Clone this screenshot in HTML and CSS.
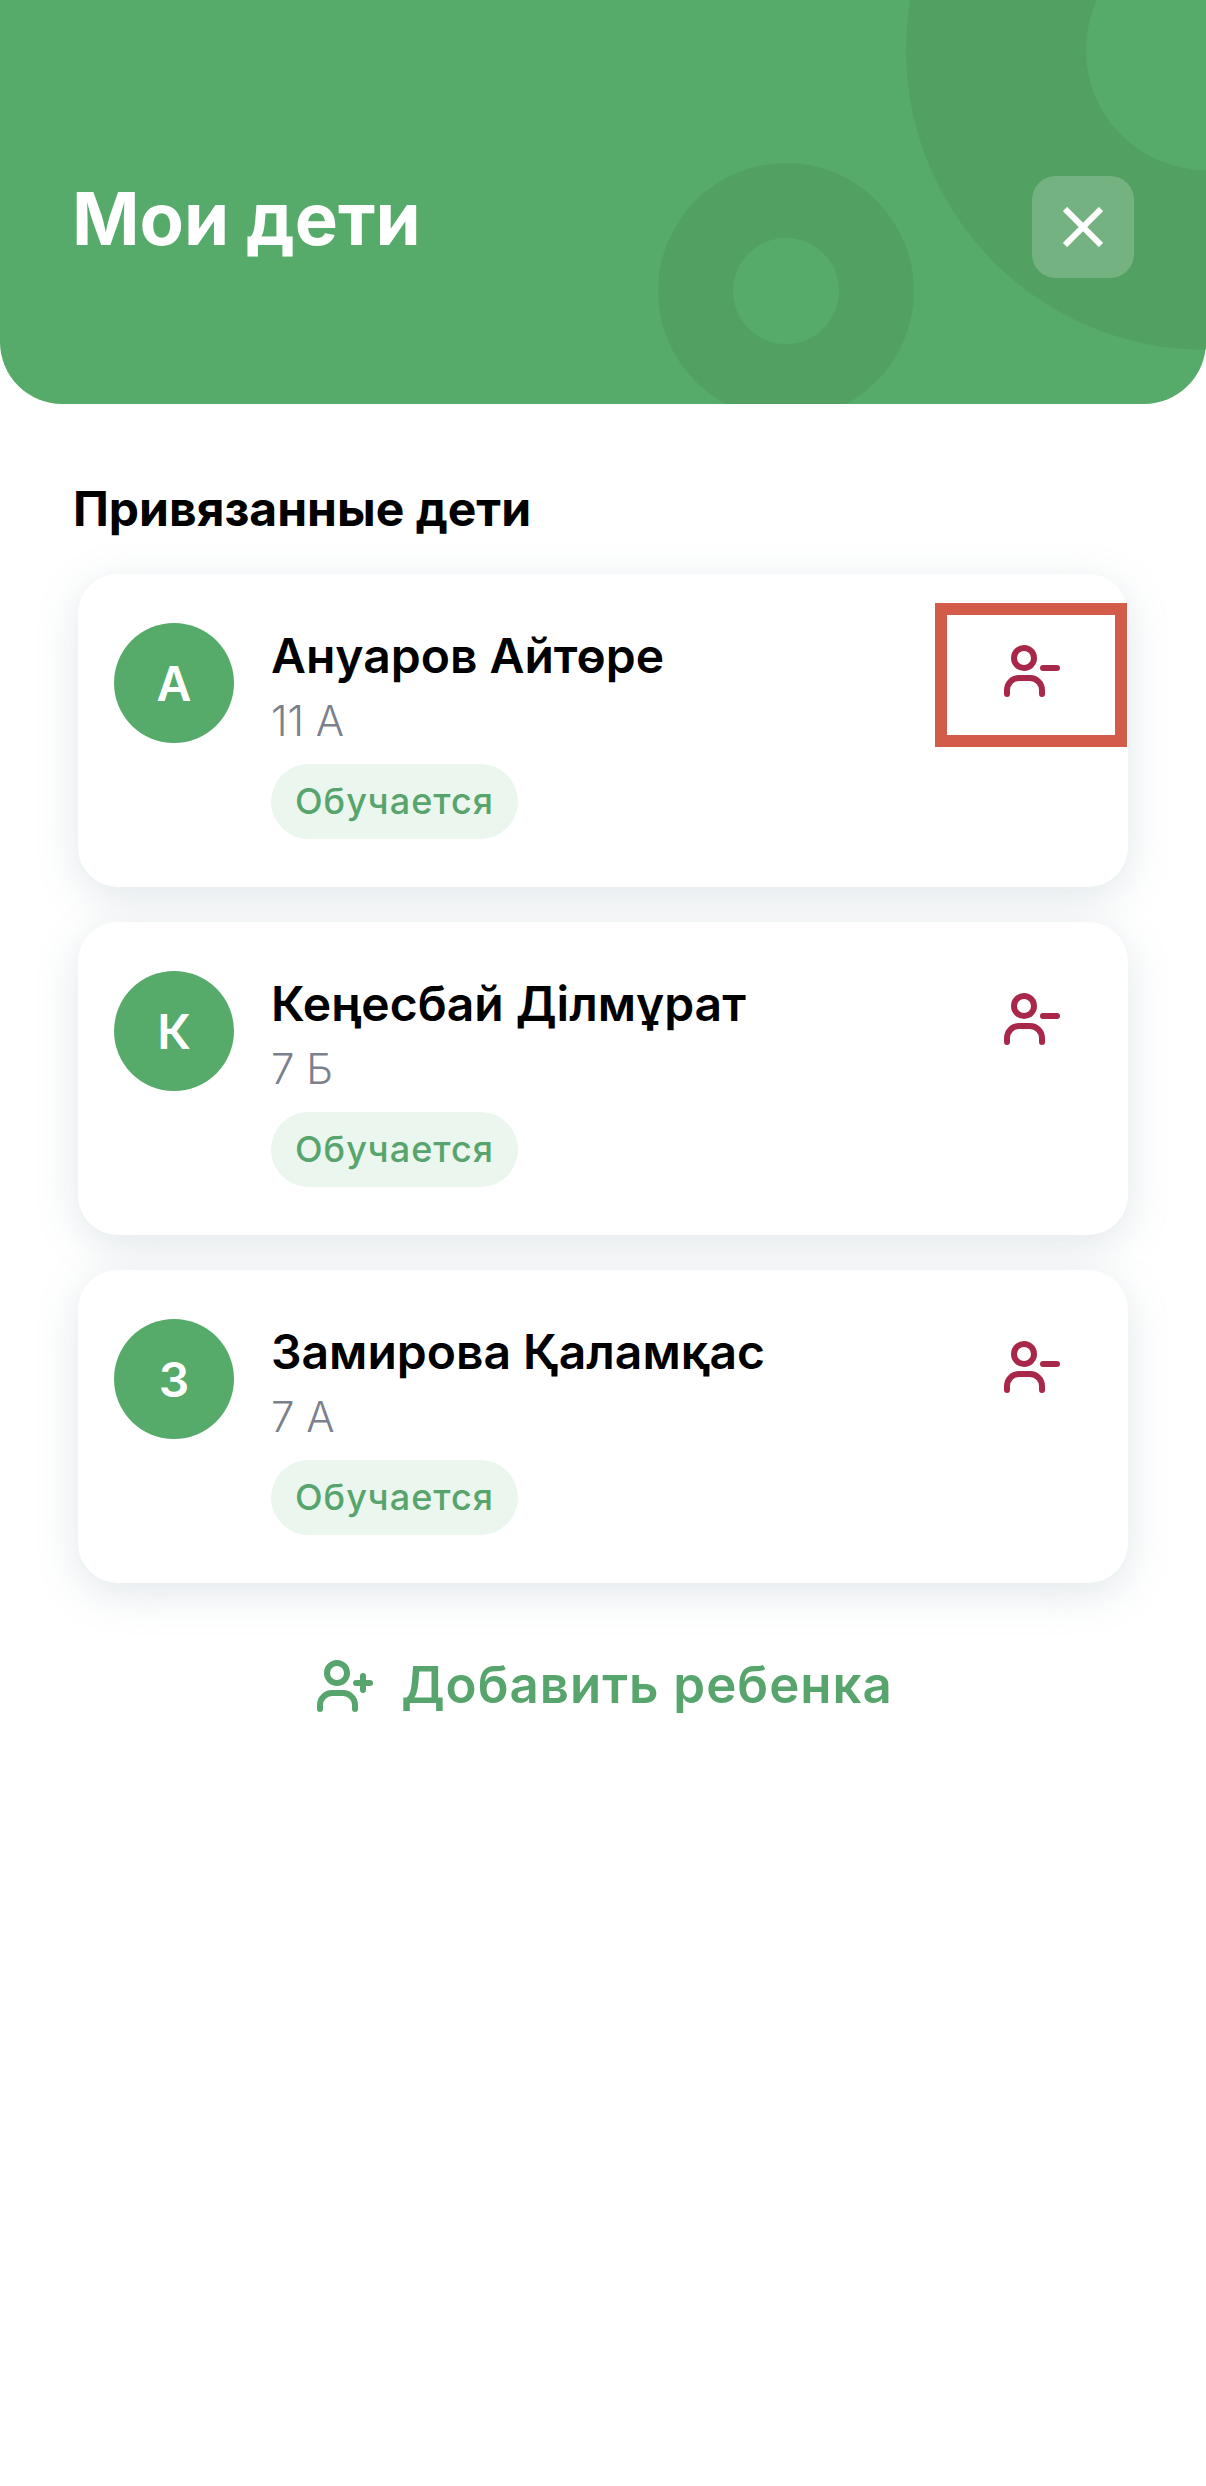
FILE: index.html
```html
<!DOCTYPE html>
<html lang="ru">
<head>
    <meta charset="UTF-8">
    <meta name="viewport" content="width=device-width, initial-scale=1.0">
    <title>Мои дети</title>
    <link rel="stylesheet" href="styles.css">
</head>
<body>

    <svg class="icon-defs" width="0" height="0">
        <symbol id="person" viewBox="0 0 60 60">
            <circle cx="24" cy="18" r="10"></circle>
            <path d="M7 54v-4a12 12 0 0 1 12-12h11a12 12 0 0 1 12 12v4"></path>
        </symbol>
    </svg>

    <header class="header">
        <span class="circle circle-big"></span>
        <span class="circle circle-big-inner"></span>
        <span class="circle circle-ring"></span>
        <span class="circle circle-ring-inner"></span>
        <h1 class="title">Мои дети</h1>
        <button class="close-btn" type="button">
            <svg viewBox="0 0 40 40" width="40" height="40">
                <path d="M2 2L38 38M38 2L2 38"></path>
            </svg>
        </button>
    </header>

    <main class="content">
        <h2 class="section-title">Привязанные дети</h2>

        <div class="card">
            <div class="avatar">А</div>
            <div class="info">
                <div class="name">Ануаров Айтөре</div>
                <div class="grade">11 А</div>
                <span class="badge">Обучается</span>
            </div>
            <div class="remove">
                <svg class="icon-remove" viewBox="0 0 60 60" width="60" height="60">
                    <use href="#person"></use>
                    <path d="M43 28H57"></path>
                </svg>
            </div>
            <span class="highlight"></span>
        </div>

        <div class="card">
            <div class="avatar">К</div>
            <div class="info">
                <div class="name">Кеңесбай Ділмұрат</div>
                <div class="grade">7 Б</div>
                <span class="badge">Обучается</span>
            </div>
            <div class="remove">
                <svg class="icon-remove" viewBox="0 0 60 60" width="60" height="60">
                    <use href="#person"></use>
                    <path d="M43 28H57"></path>
                </svg>
            </div>
        </div>

        <div class="card">
            <div class="avatar">З</div>
            <div class="info">
                <div class="name">Замирова Қаламқас</div>
                <div class="grade">7 А</div>
                <span class="badge">Обучается</span>
            </div>
            <div class="remove">
                <svg class="icon-remove" viewBox="0 0 60 60" width="60" height="60">
                    <use href="#person"></use>
                    <path d="M43 28H57"></path>
                </svg>
            </div>
        </div>

        <button class="add-child" type="button">
            <svg class="icon-add" viewBox="0 0 60 60" width="60" height="60">
                <use href="#person"></use>
                <path d="M43 28H57M50 21V35"></path>
            </svg>
            Добавить ребенка
        </button>
    </main>

</body>
</html>
```

FILE: styles.css
```css
* {
    box-sizing: border-box;
}

body {
    margin: 0;
    background: white;
    color: black;
    font-family: Inter, "Noto Sans", sans-serif;
}

.icon-defs {
    position: absolute;
}

.header {
    position: relative;
    display: flex;
    justify-content: space-between;
    align-items: center;
    height: 404px;
    padding: 176px 72px 126px 72px;
    overflow: hidden;
    background: #57ab6a;
    border-radius: 0 0 62px 62px;
}

.title {
    position: relative;
    margin: 0 0 16px;
    font-size: 72.5px;
    font-weight: 700;
    line-height: 86px;
    color: white;
}

.circle {
    position: absolute;
    border-radius: 50%;
}

.circle-big {
    top: -250px;
    left: 906px;
    width: 600px;
    height: 600px;
    background: #52a162;
}

.circle-big-inner {
    top: -70px;
    left: 1086px;
    width: 240px;
    height: 240px;
    background: #57ab6a;
}

.circle-ring {
    top: 163px;
    left: 658px;
    width: 256px;
    height: 256px;
    background: #52a162;
}

.circle-ring-inner {
    top: 238px;
    left: 733px;
    width: 106px;
    height: 106px;
    background: #57ab6a;
}

.close-btn {
    position: relative;
    display: flex;
    align-items: center;
    justify-content: center;
    width: 102px;
    height: 102px;
    padding: 0;
    border: none;
    border-radius: 24px;
    background: rgba(255, 255, 255, 0.2);
}

.close-btn path {
    fill: none;
    stroke: white;
    stroke-width: 6;
}

.content {
    padding: 77px 78px 0;
}

.section-title {
    margin: 0 0 37px -5px;
    font-size: 48px;
    font-weight: 700;
    line-height: 56px;
}

.card {
    position: relative;
    display: flex;
    align-items: flex-start;
    height: 313px;
    margin-bottom: 35px;
    padding: 49px 36px 0;
    background: white;
    border-radius: 40px;
    box-shadow: 0 10px 44px rgba(105, 135, 150, 0.2);
}

.avatar {
    display: flex;
    align-items: center;
    justify-content: center;
    flex-shrink: 0;
    width: 120px;
    height: 120px;
    border-radius: 50%;
    background: #57ab6a;
    color: white;
    font-size: 48px;
    font-weight: 600;
}

.info {
    flex: 1;
    margin-left: 37px;
}

.name {
    margin-top: 4px;
    font-size: 48px;
    font-weight: 600;
    line-height: 58px;
}

.grade {
    margin-top: 11px;
    font-size: 42px;
    font-weight: 300;
    line-height: 50px;
    color: #7a808c;
}

.badge {
    display: inline-block;
    margin-top: 18px;
    padding: 0 24px;
    height: 75px;
    border-radius: 38px;
    background: #ebf6ee;
    color: #57a56c;
    font-size: 36px;
    font-weight: 500;
    line-height: 75px;
    letter-spacing: 1px;
}

.remove {
    margin: 17px 32px 0 0;
    height: 60px;
}

.icon-remove,
.icon-add {
    fill: none;
    stroke-width: 6;
    stroke-linecap: round;
}

.icon-remove {
    stroke: #a8284a;
}

.icon-remove use,
.icon-add use {
    fill: none;
}

.highlight {
    position: absolute;
    top: 29px;
    left: 857px;
    width: 192px;
    height: 144px;
    border: 12px solid #d25c49;
}

.add-child {
    display: flex;
    align-items: center;
    justify-content: center;
    gap: 28px;
    width: 100%;
    margin-top: 72px;
    padding: 0;
    border: none;
    background: none;
    color: #57a56c;
    font-family: inherit;
    font-size: 51px;
    font-weight: 600;
    line-height: 60px;
    letter-spacing: 1px;
}

.icon-add {
    stroke: #57a56c;
}
```
